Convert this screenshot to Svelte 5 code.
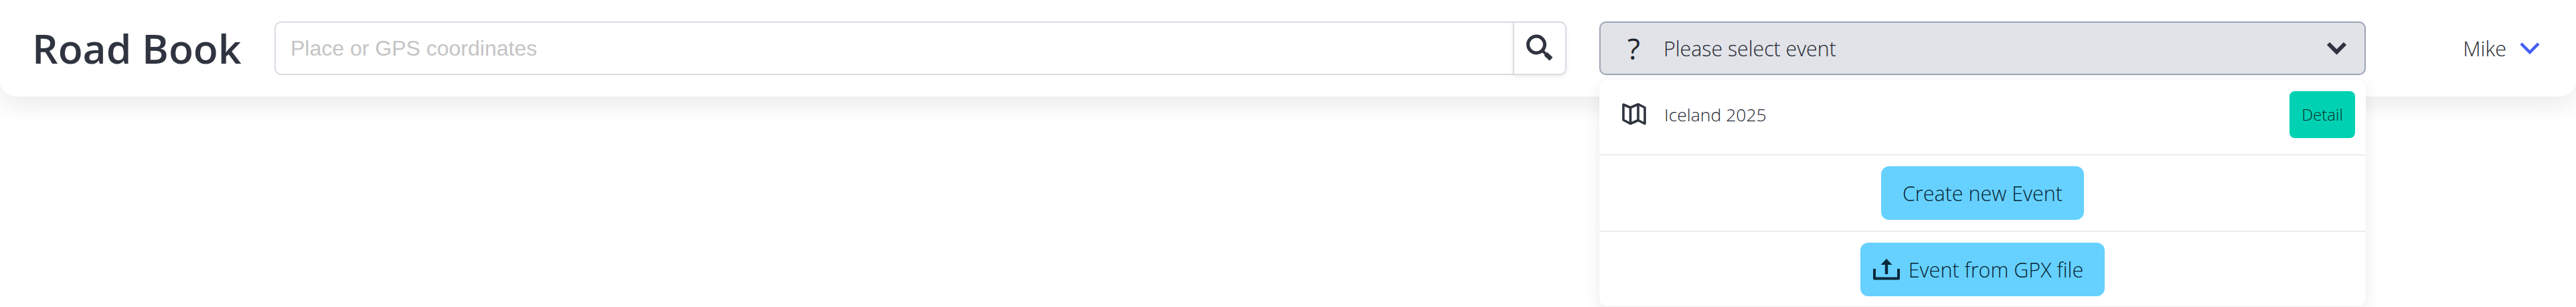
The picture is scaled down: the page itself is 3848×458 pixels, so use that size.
<script>
  const events = [{ name: 'Iceland 2025' }];
</script>

<div class="page">
  <header class="navbar">
    <h1 class="brand">Road Book</h1>
    <form class="search" onsubmit={(e) => e.preventDefault()}>
      <input class="input" type="text" placeholder="Place or GPS coordinates" />
      <button class="search-btn" type="submit" aria-label="Search">
        <svg width="48" height="48" viewBox="0 0 48 48" fill="none" stroke="#2f3440">
          <circle cx="19" cy="18.5" r="12.5" stroke-width="5" />
          <path d="M28.5 28 L41 40" stroke-width="4" />
          <path d="M33 32.5 L41 40" stroke-width="7" />
        </svg>
      </button>
    </form>
    <div class="event">
      <button class="select" type="button">
        <span class="q">?</span>
        <span class="select-label">Please select event</span>
        <svg class="caret" width="34" height="24" viewBox="0 0 34 24" fill="none" stroke="#2f3440" stroke-width="6">
          <path d="M4 5 L16.5 17.5 L29 5" />
        </svg>
      </button>
      <div class="menu">
        {#each events as ev}
          <div class="row item">
            <svg class="map" width="36" height="33" viewBox="0 0 36 33" fill="none" stroke="#2f3440" stroke-width="3.6" stroke-linejoin="round">
              <path d="M2 2 L12.5 6.5 L24 1.5 L34 6.5 V30.5 L24 25.5 L12.5 30.5 L2 25 Z" />
              <path d="M12.5 6.5 V30.5 M24 1.5 V25.5" />
            </svg>
            <span class="item-name">{ev.name}</span>
            <button class="detail" type="button">Detail</button>
          </div>
        {/each}
        <div class="row center">
          <button class="action" type="button">Create new Event</button>
        </div>
        <div class="row center last">
          <button class="action has-icon" type="button">
            <svg width="40" height="32" viewBox="0 0 40 32" fill="none" stroke="#0c2b3d">
              <path d="M2 15 V29.5 H38 V15" stroke-width="4" stroke-linejoin="round" />
              <path d="M20 23 V8" stroke-width="4.4" />
              <path d="M20 0 L28.5 9 H11.5 Z" fill="#0c2b3d" stroke="none" />
            </svg>
            <span>Event from GPX file</span>
          </button>
        </div>
      </div>
    </div>
    <div class="user">
      <span>Mike</span>
      <svg width="30" height="20" viewBox="0 0 30 20" fill="none" stroke="#4460f5" stroke-width="4.5">
        <path d="M2 3 L15 16 L28 3" />
      </svg>
    </div>
  </header>
</div>

<style>
  :global(body) {
    margin: 0;
    background: #fff;
  }
  .page {
    height: 458px;
    overflow: hidden;
    font-family: "Open Sans", "Noto Sans", sans-serif;
    font-weight: 300;
    color: #23262f;
  }
  .navbar {
    height: 144px;
    box-sizing: border-box;
    display: flex;
    align-items: center;
    padding: 0 54px 0 48px;
    background: #fff;
    border-radius: 24px;
    box-shadow: 0 16px 32px rgba(10, 10, 10, 0.07);
  }
  .brand {
    width: 314px;
    flex: none;
    margin: 0 48px 0 0;
    font-size: 60.5px;
    font-weight: 600;
    line-height: 80px;
    color: #2f3440;
    white-space: nowrap;
  }
  .search {
    display: flex;
    flex: none;
    width: 1930px;
    height: 80px;
    margin-right: 49px;
  }
  .input {
    flex: 1;
    min-width: 0;
    box-sizing: border-box;
    height: 80px;
    padding: 0 22px;
    border: 2px solid #d9dbe3;
    border-right: 0;
    border-radius: 10px 0 0 10px;
    font-family: "Liberation Sans", sans-serif;
    font-size: 32px;
    outline: none;
  }
  .input::placeholder {
    color: #c4c4c4;
  }
  .search-btn {
    width: 80px;
    height: 80px;
    padding: 0;
    display: flex;
    align-items: center;
    justify-content: center;
    background: #fff;
    border: 2px solid #d9dbe3;
    border-radius: 0 10px 10px 0;
    box-shadow: 0 2px 6px rgba(10, 10, 10, 0.08);
  }
  .event {
    position: relative;
    width: 1145px;
    flex: none;
  }
  .select {
    width: 100%;
    height: 80px;
    box-sizing: border-box;
    display: flex;
    align-items: center;
    padding: 0 24px 0 40px;
    background: #e1e3e8;
    border: 2px solid #9ba3b4;
    border-radius: 10px;
    font: inherit;
    font-size: 30.3px;
    color: #23262f;
  }
  .q {
    width: 54px;
    font-size: 44px;
    font-weight: 400;
    line-height: 1;
    text-align: left;
  }
  .select-label {
    flex: 1;
    text-align: left;
  }
  .menu {
    position: absolute;
    top: 87px;
    left: 0;
    right: 0;
    box-sizing: border-box;
    background: #fff;
    border-radius: 12px;
    box-shadow: 0 8px 24px rgba(10, 10, 10, 0.08), 0 0 2px rgba(10, 10, 10, 0.06);
  }
  .row {
    display: flex;
    align-items: center;
    border-bottom: 2px solid #ebecf0;
    box-sizing: border-box;
  }
  .item {
    height: 113px;
    padding: 0 16px 8px 34px;
  }
  .map {
    margin-right: 27px;
  }
  .item-name {
    flex: 1;
    font-size: 26.5px;
  }
  .detail {
    width: 98px;
    height: 70px;
    padding: 0;
    background: #00d1b2;
    border: 0;
    border-radius: 8px;
    font: inherit;
    font-size: 24px;
    color: #06302a;
  }
  .center {
    height: 114px;
    justify-content: center;
  }
  .last {
    height: 111px;
    border-bottom: 0;
  }
  .action {
    height: 80px;
    padding: 0 32px;
    display: flex;
    align-items: center;
    gap: 13px;
    background: #66d1ff;
    border: 0;
    border-radius: 12px;
    font: inherit;
    font-size: 30.5px;
    color: #082434;
  }
  .has-icon {
    padding-left: 19px;
  }
  .user {
    margin-left: auto;
    display: flex;
    align-items: center;
    gap: 20px;
    font-size: 30.5px;
  }
</style>
